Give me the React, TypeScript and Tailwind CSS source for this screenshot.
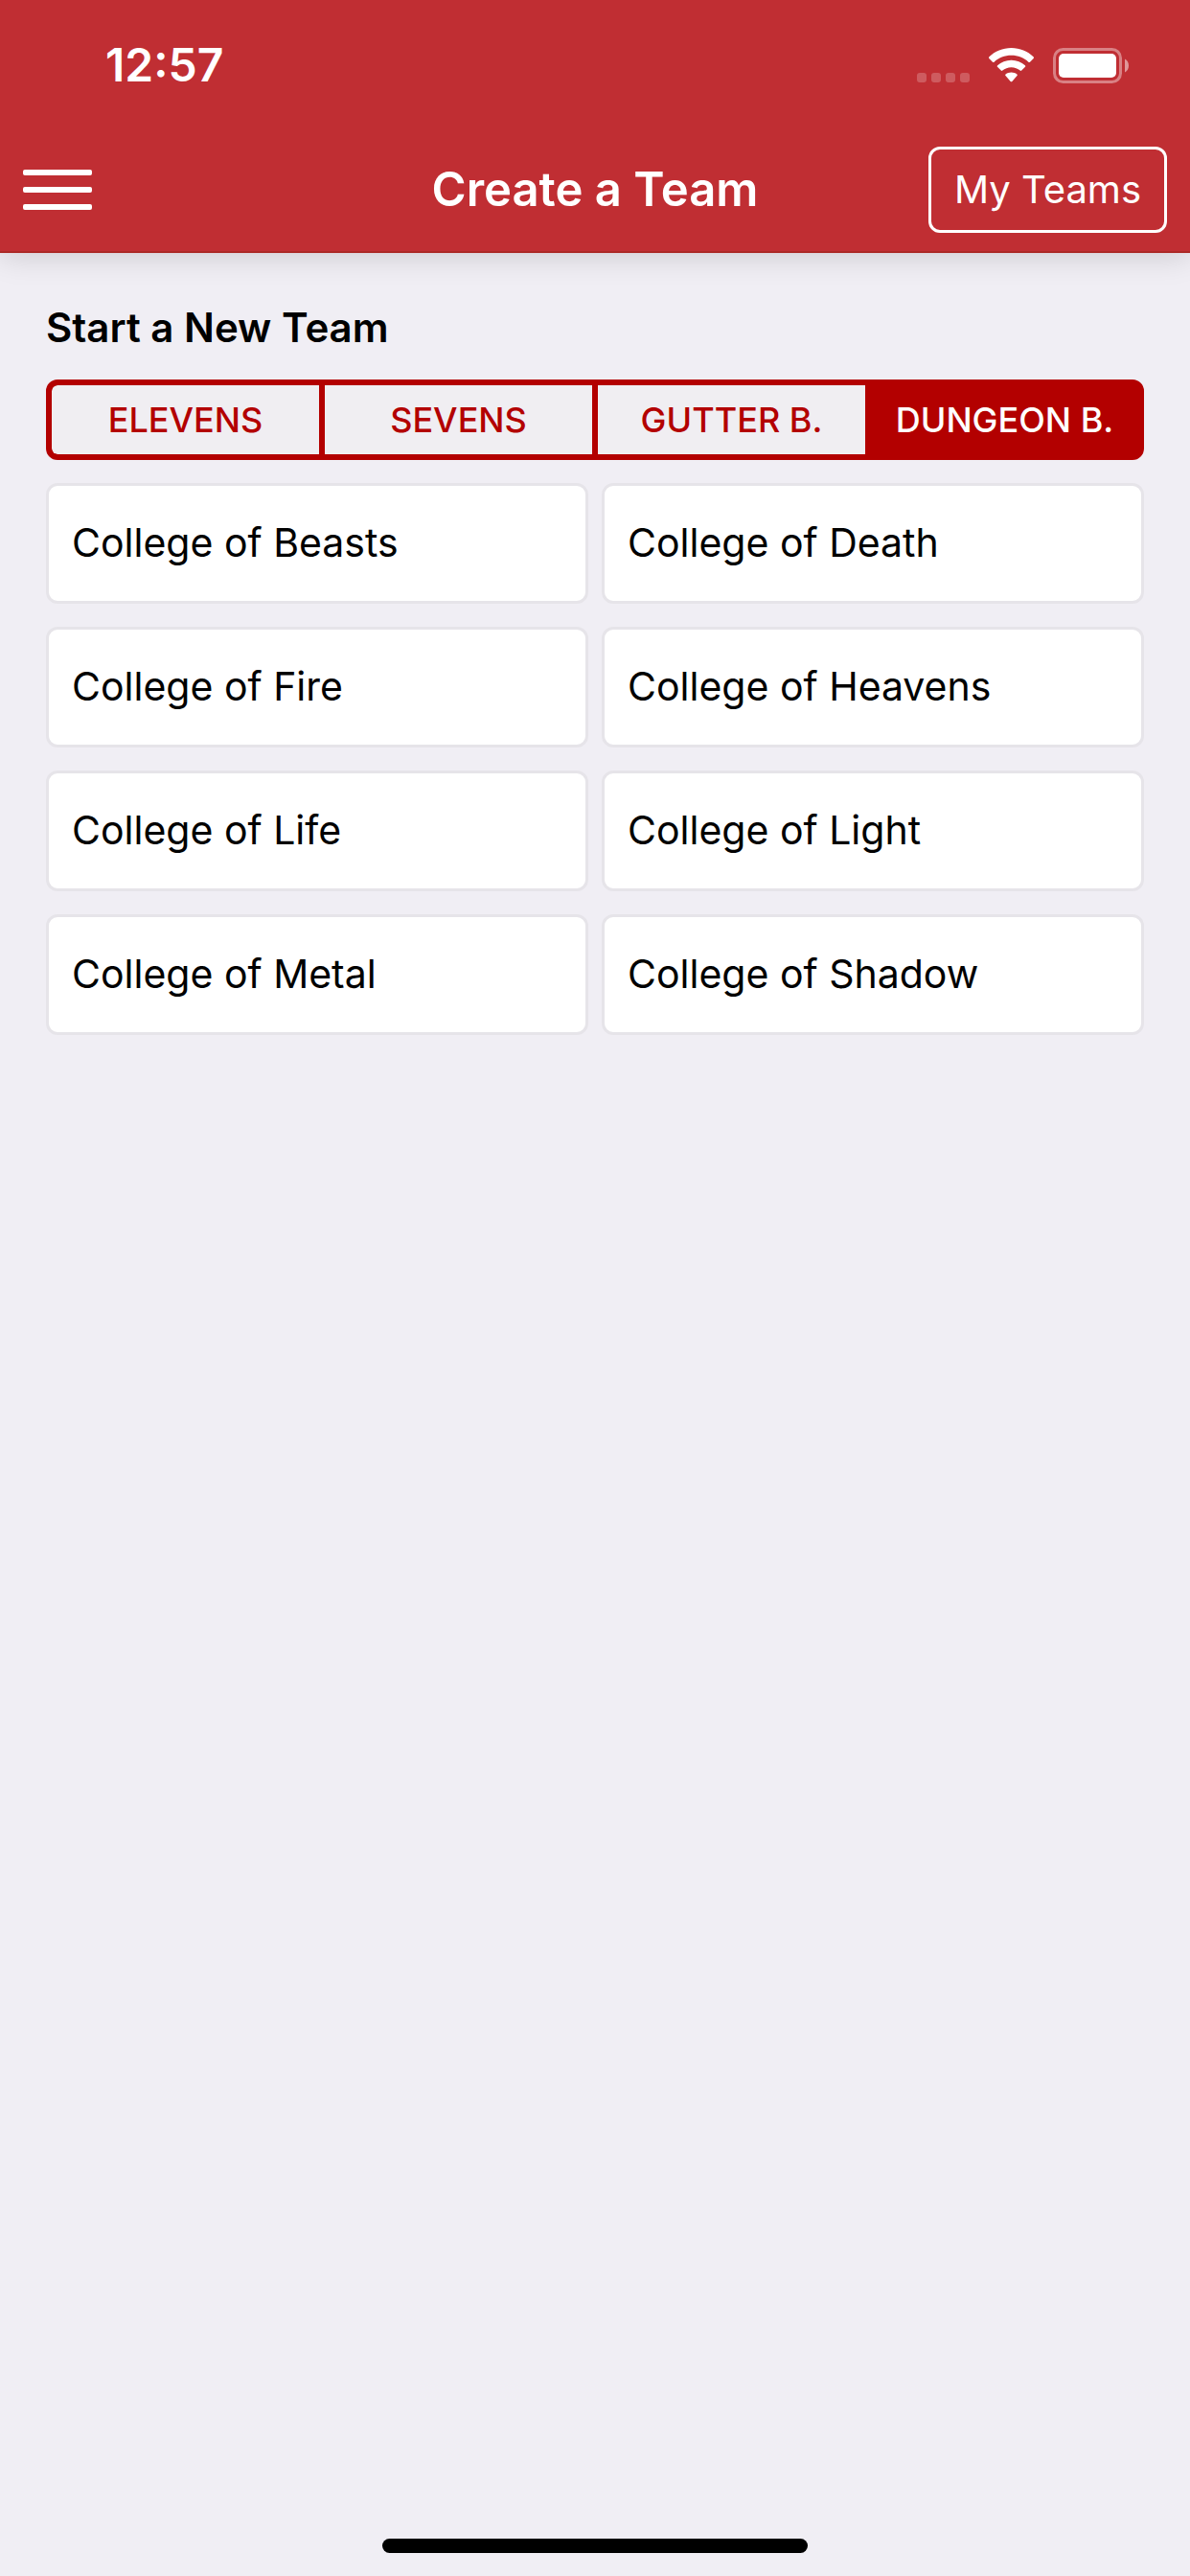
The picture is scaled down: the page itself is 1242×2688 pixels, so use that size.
import { useState } from "react";

interface Team {
  id: string;
  name: string;
}

const formats = ["Elevens", "Sevens", "Gutter B.", "Dungeon B."];

const teams: Team[] = [
  { id: "beasts", name: "College of Beasts" },
  { id: "death", name: "College of Death" },
  { id: "fire", name: "College of Fire" },
  { id: "heavens", name: "College of Heavens" },
  { id: "life", name: "College of Life" },
  { id: "light", name: "College of Light" },
  { id: "metal", name: "College of Metal" },
  { id: "shadow", name: "College of Shadow" },
];

function StatusIcons() {
  return (
    <div className="flex items-end gap-5">
      {/* No signal dots */}
      <svg width="55" height="11" viewBox="0 0 55 11" fill="#fff" fillOpacity="0.22" aria-hidden="true">
        <rect x="0" y="0" width="10" height="10" rx="3" />
        <rect x="15" y="0" width="10" height="10" rx="3" />
        <rect x="30" y="0" width="10" height="10" rx="3" />
        <rect x="45" y="0" width="10" height="10" rx="3" />
      </svg>

      {/* Wifi */}
      <svg width="47" height="37" viewBox="0 0 47 37" fill="#fff" aria-hidden="true">
        <path d="M23.5 0C14.6 0 6.5 3.5 0.4 9.2C-0.1 9.7 -0.1 10.4 0.3 10.9L4 14.7C4.4 15.1 5.1 15.1 5.6 14.7C10.3 10.4 16.6 7.8 23.5 7.8C30.4 7.8 36.7 10.4 41.4 14.7C41.9 15.1 42.6 15.1 43 14.7L46.7 10.9C47.1 10.4 47.1 9.7 46.6 9.2C40.5 3.5 32.4 0 23.5 0Z" />
        <path d="M23.5 12.7C18 12.7 12.9 14.8 9.1 18.2C8.6 18.7 8.6 19.4 9 19.8L12.8 23.6C13.2 24 13.9 24 14.3 23.6C16.8 21.5 20 20.2 23.5 20.2C27 20.2 30.2 21.5 32.7 23.6C33.1 24 33.8 24 34.2 23.6L38 19.8C38.4 19.4 38.4 18.7 37.9 18.2C34.1 14.8 29 12.7 23.5 12.7Z" />
        <path d="M23.5 25.5C21.3 25.5 19.3 26.2 17.6 27.4C17.1 27.8 17.1 28.5 17.5 28.9L22.7 34.9C23.2 35.5 23.8 35.5 24.3 34.9L29.5 28.9C29.9 28.5 29.9 27.8 29.4 27.4C27.7 26.2 25.7 25.5 23.5 25.5Z" />
      </svg>

      {/* Battery */}
      <svg width="79" height="37" viewBox="0 0 79 37" fill="#fff" aria-hidden="true">
        <rect x="1.5" y="1.5" width="69" height="34" rx="9" fill="none" stroke="#fff" strokeWidth="3" strokeOpacity="0.4" />
        <rect x="6" y="6" width="60" height="25" rx="5" />
        <path d="M75 11.5C77.5 12.8 79 15.5 79 18.5C79 21.5 77.5 24.2 75 25.5Z" fillOpacity="0.5" />
      </svg>
    </div>
  );
}

function App() {
  const [format, setFormat] = useState<string>("Dungeon B.");

  return (
    <div className="flex min-h-screen flex-col bg-[#f0eef4] font-['Inter','Liberation_Sans',sans-serif] text-black">
      <header className="border-b-2 border-[#ac2a27] bg-[#c02e33] text-white shadow-[0_4px_30px_rgba(0,0,0,0.14)]">
        <div className="flex h-[134px] items-center justify-between pt-0.5 pr-16 pl-[110px]">
          <span className="text-5xl font-semibold">12:57</span>
          <StatusIcons />
        </div>

        <div className="grid h-32 grid-cols-[1fr_auto_1fr] items-center px-6">
          <button type="button" aria-label="Menu" className="flex w-[72px] flex-col gap-3">
            <span className="h-[6px] rounded-xs bg-white" />
            <span className="h-[6px] rounded-xs bg-white" />
            <span className="h-[6px] rounded-xs bg-white" />
          </button>
          <h1 className="text-[49px] font-semibold">Create a Team</h1>
          <button
            type="button"
            className="h-[90px] justify-self-end rounded-xl border-3 border-white px-6 text-[40px]"
          >
            My Teams
          </button>
        </div>
      </header>

      <main className="flex-1 px-12 pt-12">
        <h2 className="text-[42px] leading-[60px] font-semibold">Start a New Team</h2>

        <div className="mt-6 flex gap-[6px] overflow-hidden rounded-xl border-6 border-[#b30000] bg-[#b30000]">
          {formats.map((item) => (
            <button
              key={item}
              type="button"
              aria-pressed={item === format}
              onClick={() => setFormat(item)}
              className={`h-[72px] flex-1 text-4xl font-medium whitespace-nowrap uppercase first:rounded-l-md last:rounded-r-md ${
                item === format ? "bg-[#b30000] text-white" : "bg-[#f0eef2] text-[#b30000]"
              }`}
            >
              {item}
            </button>
          ))}
        </div>

        <div className="mt-6 grid grid-cols-2 gap-x-[14px] gap-y-6">
          {teams.map((team) => (
            <button
              key={team.id}
              type="button"
              className="h-[126px] rounded-xl border-3 border-[#e6e4e9] bg-white px-6 text-left text-[41px]"
            >
              {team.name}
            </button>
          ))}
        </div>
      </main>

      {/* Home indicator */}
      <div className="mx-auto mb-6 h-[15px] w-[444px] rounded-full bg-black" />
    </div>
  );
}

export default App;
